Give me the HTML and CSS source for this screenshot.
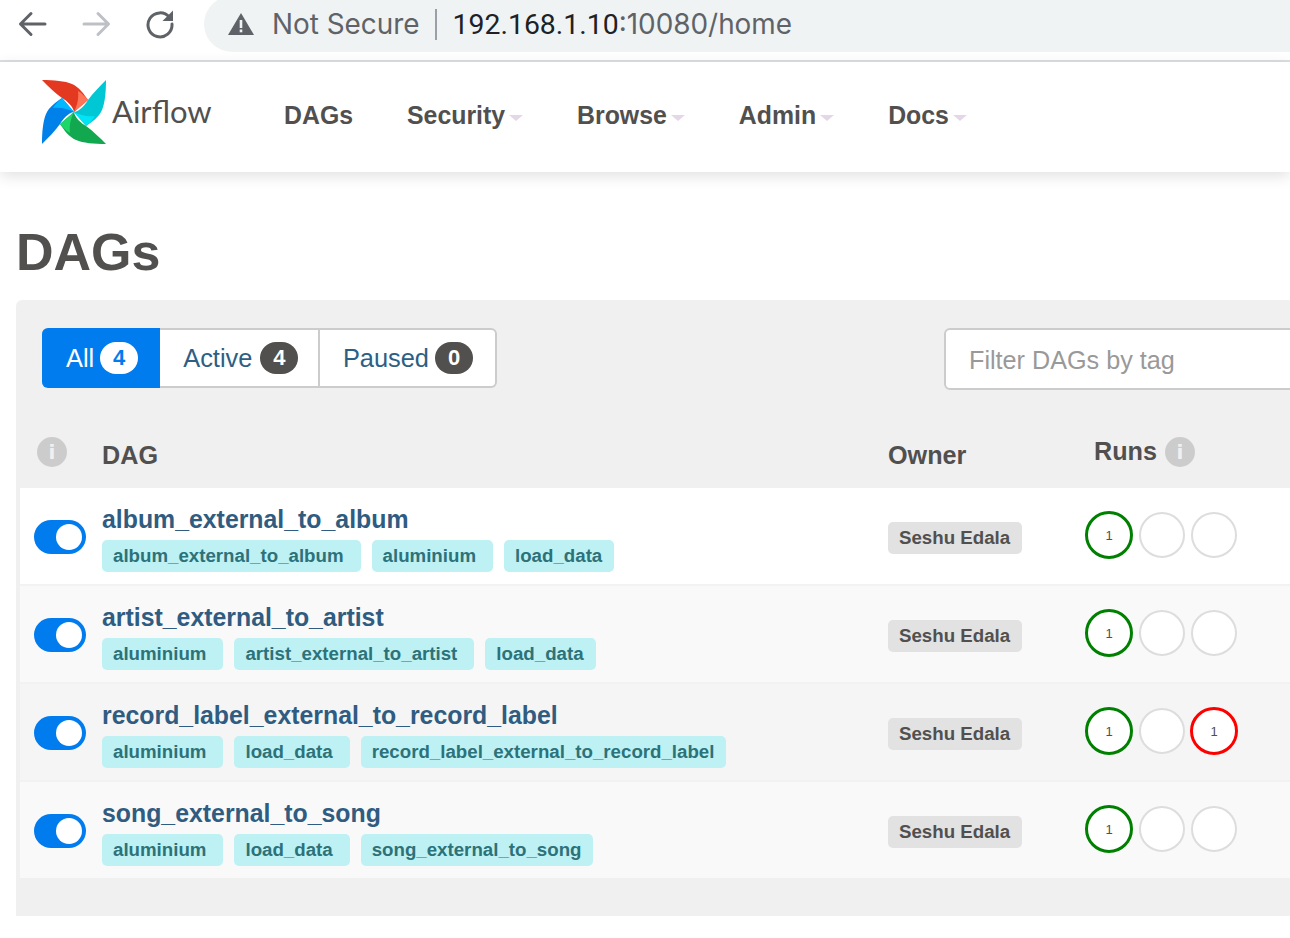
FILE: index.html
```html
<!DOCTYPE html>
<html lang="en">
<head>
<meta charset="utf-8">
<title>DAGs - Airflow</title>
<link rel="stylesheet" href="styles.css">
</head>
<body>
<div class="chrome">
  <svg class="chrome-icon" width="30" height="30" viewBox="0 0 30 30"><path d="M28 15H4M14 4.500L3.500 15L14 25.500" fill="none" stroke="#5f6368" stroke-width="3" stroke-linecap="round" stroke-linejoin="round"/></svg>
  <svg class="chrome-icon" width="30" height="30" viewBox="0 0 30 30"><path d="M3 15H27M17 4.500L27.500 15L17 25.500" fill="none" stroke="#bdc1c6" stroke-width="3" stroke-linecap="round" stroke-linejoin="round"/></svg>
  <svg class="chrome-icon" width="30" height="30" viewBox="0 0 30 30"><path d="M24.500 8.500A12 12 0 1 0 27 15" fill="none" stroke="#5f6368" stroke-width="3" stroke-linecap="round"/><path d="M28 1.500V12H17.500Z" fill="#5f6368"/></svg>
  <div class="omnibox">
    <svg class="warn" width="26" height="22" viewBox="0 0 26 22"><path d="M13 0L26 22H0Z" fill="#5f6368"/><rect x="11.700" y="7" width="2.600" height="8" fill="#f0f3f4"/><rect x="11.700" y="16.500" width="2.600" height="2.800" fill="#f0f3f4"/></svg>
    <span class="not-secure">Not Secure</span>
    <span class="omni-divider"></span>
    <span class="url"><span class="host">192.168.1.10</span>:10080/home</span>
  </div>
</div>

<nav class="navbar">
  <div class="brand">
    <svg width="66" height="66" viewBox="-33 -33 66 66">
      <defs>
        <g id="blade-shape">
          <path id="blade-main" d="M-32 -32C-20 -32 -9 -31 -2 -28C5 -25 10 -18 14 -12L0 0C-1 -6 -7 -11 -12 -14C-19 -19 -26 -26 -32 -32Z"/>
        </g>
      </defs>
      <g><use href="#blade-shape" fill="#e43921"/><path d="M0 0C3 -6 5 -13 4 -21C8 -19 11 -15 14 -12Z" fill="#ff7557"/></g>
      <g transform="rotate(90)"><use href="#blade-shape" fill="#00c7d4"/><path d="M0 0C3 -6 5 -13 4 -21C8 -19 11 -15 14 -12Z" fill="#00e4f5"/></g>
      <g transform="rotate(180)"><use href="#blade-shape" fill="#11a850"/><path d="M0 0C3 -6 5 -13 4 -21C8 -19 11 -15 14 -12Z" fill="#1fd668"/></g>
      <g transform="rotate(270)"><use href="#blade-shape" fill="#0081ea"/><path d="M0 0C3 -6 5 -13 4 -21C8 -19 11 -15 14 -12Z" fill="#00b8ff"/></g>
    </svg>
    <span class="brand-name">Airflow</span>
  </div>
  <ul class="nav-list">
    <li class="nav-item">DAGs</li>
    <li class="nav-item">Security<span class="caret"></span></li>
    <li class="nav-item">Browse<span class="caret"></span></li>
    <li class="nav-item">Admin<span class="caret"></span></li>
    <li class="nav-item">Docs<span class="caret"></span></li>
  </ul>
</nav>

<main class="content">
  <h1 class="page-title">DAGs</h1>
  <section class="panel">
    <div class="filters">
      <div class="pills">
        <div class="pill pill-on">All <span class="count count-on">4</span></div>
        <div class="pill">Active <span class="count">4</span></div>
        <div class="pill">Paused <span class="count">0</span></div>
      </div>
      <div class="tag-filter">Filter DAGs by tag</div>
    </div>

    <div class="table-head">
      <div class="head-info"><span class="info">i</span></div>
      <div class="head-cell">DAG</div>
      <div class="head-cell">Owner</div>
      <div class="head-cell head-runs">Runs <span class="info">i</span></div>
    </div>

    <div class="row">
      <div class="toggle"><span class="knob"></span></div>
      <div class="dag">
        <a class="dag-name">album_external_to_album</a>
        <div class="tags"><span class="tag">album_external_to_album</span><span class="tag">aluminium</span><span class="tag">load_data</span></div>
      </div>
      <div class="owner-cell"><span class="owner">Seshu Edala</span></div>
      <div class="runs"><span class="run run-success">1</span><span class="run"></span><span class="run"></span></div>
    </div>

    <div class="row row-alt">
      <div class="toggle"><span class="knob"></span></div>
      <div class="dag">
        <a class="dag-name">artist_external_to_artist</a>
        <div class="tags"><span class="tag">aluminium</span><span class="tag">artist_external_to_artist</span><span class="tag">load_data</span></div>
      </div>
      <div class="owner-cell"><span class="owner">Seshu Edala</span></div>
      <div class="runs"><span class="run run-success">1</span><span class="run"></span><span class="run"></span></div>
    </div>

    <div class="row row-hover">
      <div class="toggle"><span class="knob"></span></div>
      <div class="dag">
        <a class="dag-name">record_label_external_to_record_label</a>
        <div class="tags"><span class="tag">aluminium</span><span class="tag">load_data</span><span class="tag">record_label_external_to_record_label</span></div>
      </div>
      <div class="owner-cell"><span class="owner">Seshu Edala</span></div>
      <div class="runs"><span class="run run-success">1</span><span class="run"></span><span class="run run-failed">1</span></div>
    </div>

    <div class="row row-alt row-last">
      <div class="toggle"><span class="knob"></span></div>
      <div class="dag">
        <a class="dag-name">song_external_to_song</a>
        <div class="tags"><span class="tag">aluminium</span><span class="tag">load_data</span><span class="tag">song_external_to_song</span></div>
      </div>
      <div class="owner-cell"><span class="owner">Seshu Edala</span></div>
      <div class="runs"><span class="run run-success">1</span><span class="run"></span><span class="run"></span></div>
    </div>
  </section>
</main>
</body>
</html>
```

FILE: styles.css
```css
* { box-sizing: border-box; }
html, body { margin: 0; padding: 0; height: 100%; overflow: hidden; background: #fff; }
body { font-family: "Liberation Sans", Arial, sans-serif; color: #51504f; }

.chrome { height: 62px; display: flex; align-items: flex-start; padding: 9px 0 0 17px; border-bottom: 2px solid #dadfe3; gap: 34px; overflow: hidden; }
.chrome-icon { flex: none; }
.omnibox { flex: 1; height: 56px; margin: -13px 0 0 -5px; padding-left: 24px; background: #f0f3f4; border-radius: 28px 0 0 28px; display: flex; align-items: center; font-family: Inter, Roboto, sans-serif; font-size: 27.900px; color: #5f6368; }
.warn { flex: none; }
.not-secure { margin-left: 18px; }
.omni-divider { width: 2px; height: 31px; background: #9aa0a6; margin: 0 16px 0 15px; }
.host { color: #202124; font-family: Roboto, sans-serif; font-size: 28.400px; }

.navbar { height: 110px; display: flex; align-items: flex-start; padding: 17px 0 0 41px; background: #fff; box-shadow: 0 4px 14px rgba(0, 0, 0, .12); position: relative; }
.brand { display: flex; align-items: center; width: 243px; flex: none; }
.brand-name { font-family: Lato, sans-serif; font-size: 31px; font-weight: 400; color: #51504f; margin: -2px 0 0 5px; }
.nav-list { list-style: none; display: flex; gap: 54px; margin: 18px 0 0; padding: 0; }
.nav-item { font-size: 24.850px; font-weight: 700; line-height: 38px; display: flex; align-items: center; }
.caret { width: 0; height: 0; margin: 3px 0 0 4px; border-left: 7px solid transparent; border-right: 7px solid transparent; border-top: 6px solid #e4d7e8; }

.content { padding: 0 0 0 16px; }
.page-title { margin: 48px 0 16px 0; font-size: 52px; line-height: 64px; font-weight: 700; color: #51504f; }
.panel { height: 616px; margin-right: -20px; background: #f0f0f0; border-radius: 6px 0 0 0; padding: 28px 0 0 4px; }

.filters { display: flex; justify-content: space-between; padding-left: 22px; height: 62px; }
.pills { display: flex; height: 60px; }
.pill { display: flex; align-items: center; gap: 8px; padding: 0 19.500px 0 23px; background: #fff; border: 2px solid #ccc; border-left: 0; font-size: 25.400px; color: #2d5f85; }
.pill:last-child { border-radius: 0 6px 6px 0; gap: 6px; padding-right: 21.500px; }
.pill-on { background: #017cee; border-color: #017cee; color: #fff; border-radius: 6px 0 0 6px; gap: 6px; padding: 0 20px 0 24px; }
.count { min-width: 38px; height: 32px; border-radius: 16px; background: #51504f; color: #fff; font-size: 22px; font-weight: 700; display: flex; align-items: center; justify-content: center; }
.count-on { background: #fff; color: #017cee; }
.tag-filter { width: 366px; height: 62px; padding: 0 0 0 23px; background: #fff; border: 2px solid #ccc; border-radius: 6px; font-size: 25.200px; line-height: 60px; color: #999; }

.table-head { display: grid; grid-template-columns: 82px 786px 206px 1fr; height: 98px; align-items: center; padding-top: 30px; }
.head-info { padding-left: 17px; display: flex; margin-top: -4px; }
.head-cell { font-size: 25.200px; font-weight: 700; padding-top: 2px; }
.head-runs { display: flex; align-items: center; gap: 8px; padding-top: 0; margin-top: -6px; }
.head-runs .info { margin-top: 2px; }
.info { width: 30px; height: 30px; border-radius: 50%; background: #ccc; color: #f0f0f0; font-family: "DejaVu Sans", sans-serif; font-weight: 700; font-size: 20px; display: flex; align-items: center; justify-content: center; }

.row { display: grid; grid-template-columns: 82px 786px 198px 1fr; height: 98px; background: #fff; border-bottom: 2px solid #f2f2f2; align-items: start; }
.row-alt { background: #f9f9f9; }
.row-hover { background: #f5f5f5; }
.row-last { border-bottom-color: #f0f0f0; }
.toggle { width: 52px; height: 34px; margin: 32px 0 0 14px; padding: 4px; background: #017cee; border-radius: 17px; display: flex; justify-content: flex-end; }
.knob { width: 26px; height: 26px; border-radius: 50%; background: #fff; }
.dag { padding-top: 16px; }
.dag-name { display: block; font-size: 24.850px; font-weight: 700; line-height: 32px; color: #2f5c80; }
.tags { display: flex; gap: 11px; margin-top: 4px; }
.tag { height: 32px; padding: 0 17px 0 11px; border-radius: 5px; background: #bdf1f4; color: #2d7279; font-size: 18.700px; font-weight: 700; line-height: 31px; white-space: nowrap; }
.tag:last-child { padding-right: 12px; }
.owner-cell { padding-top: 34px; }
.owner { display: inline-block; height: 32px; padding: 0 12px 0 11px; border-radius: 5px; background: #e2e2e2; font-size: 18.700px; font-weight: 700; line-height: 31px; white-space: nowrap; }
.runs { display: flex; gap: 4.500px; align-items: center; padding-top: 23px; margin-left: -1px; }
.run { width: 46px; height: 46px; margin: 1px; flex: none; border-radius: 50%; background: #fff; border: 2px solid #ddd; color: #51504f; font-size: 13px; display: flex; align-items: center; justify-content: center; }
.run-success, .run-failed { width: 48px; height: 48px; margin: 0; border-width: 3.500px; }
.run-success { border-color: #008000; }
.run-failed { border-color: #f00; }
```
